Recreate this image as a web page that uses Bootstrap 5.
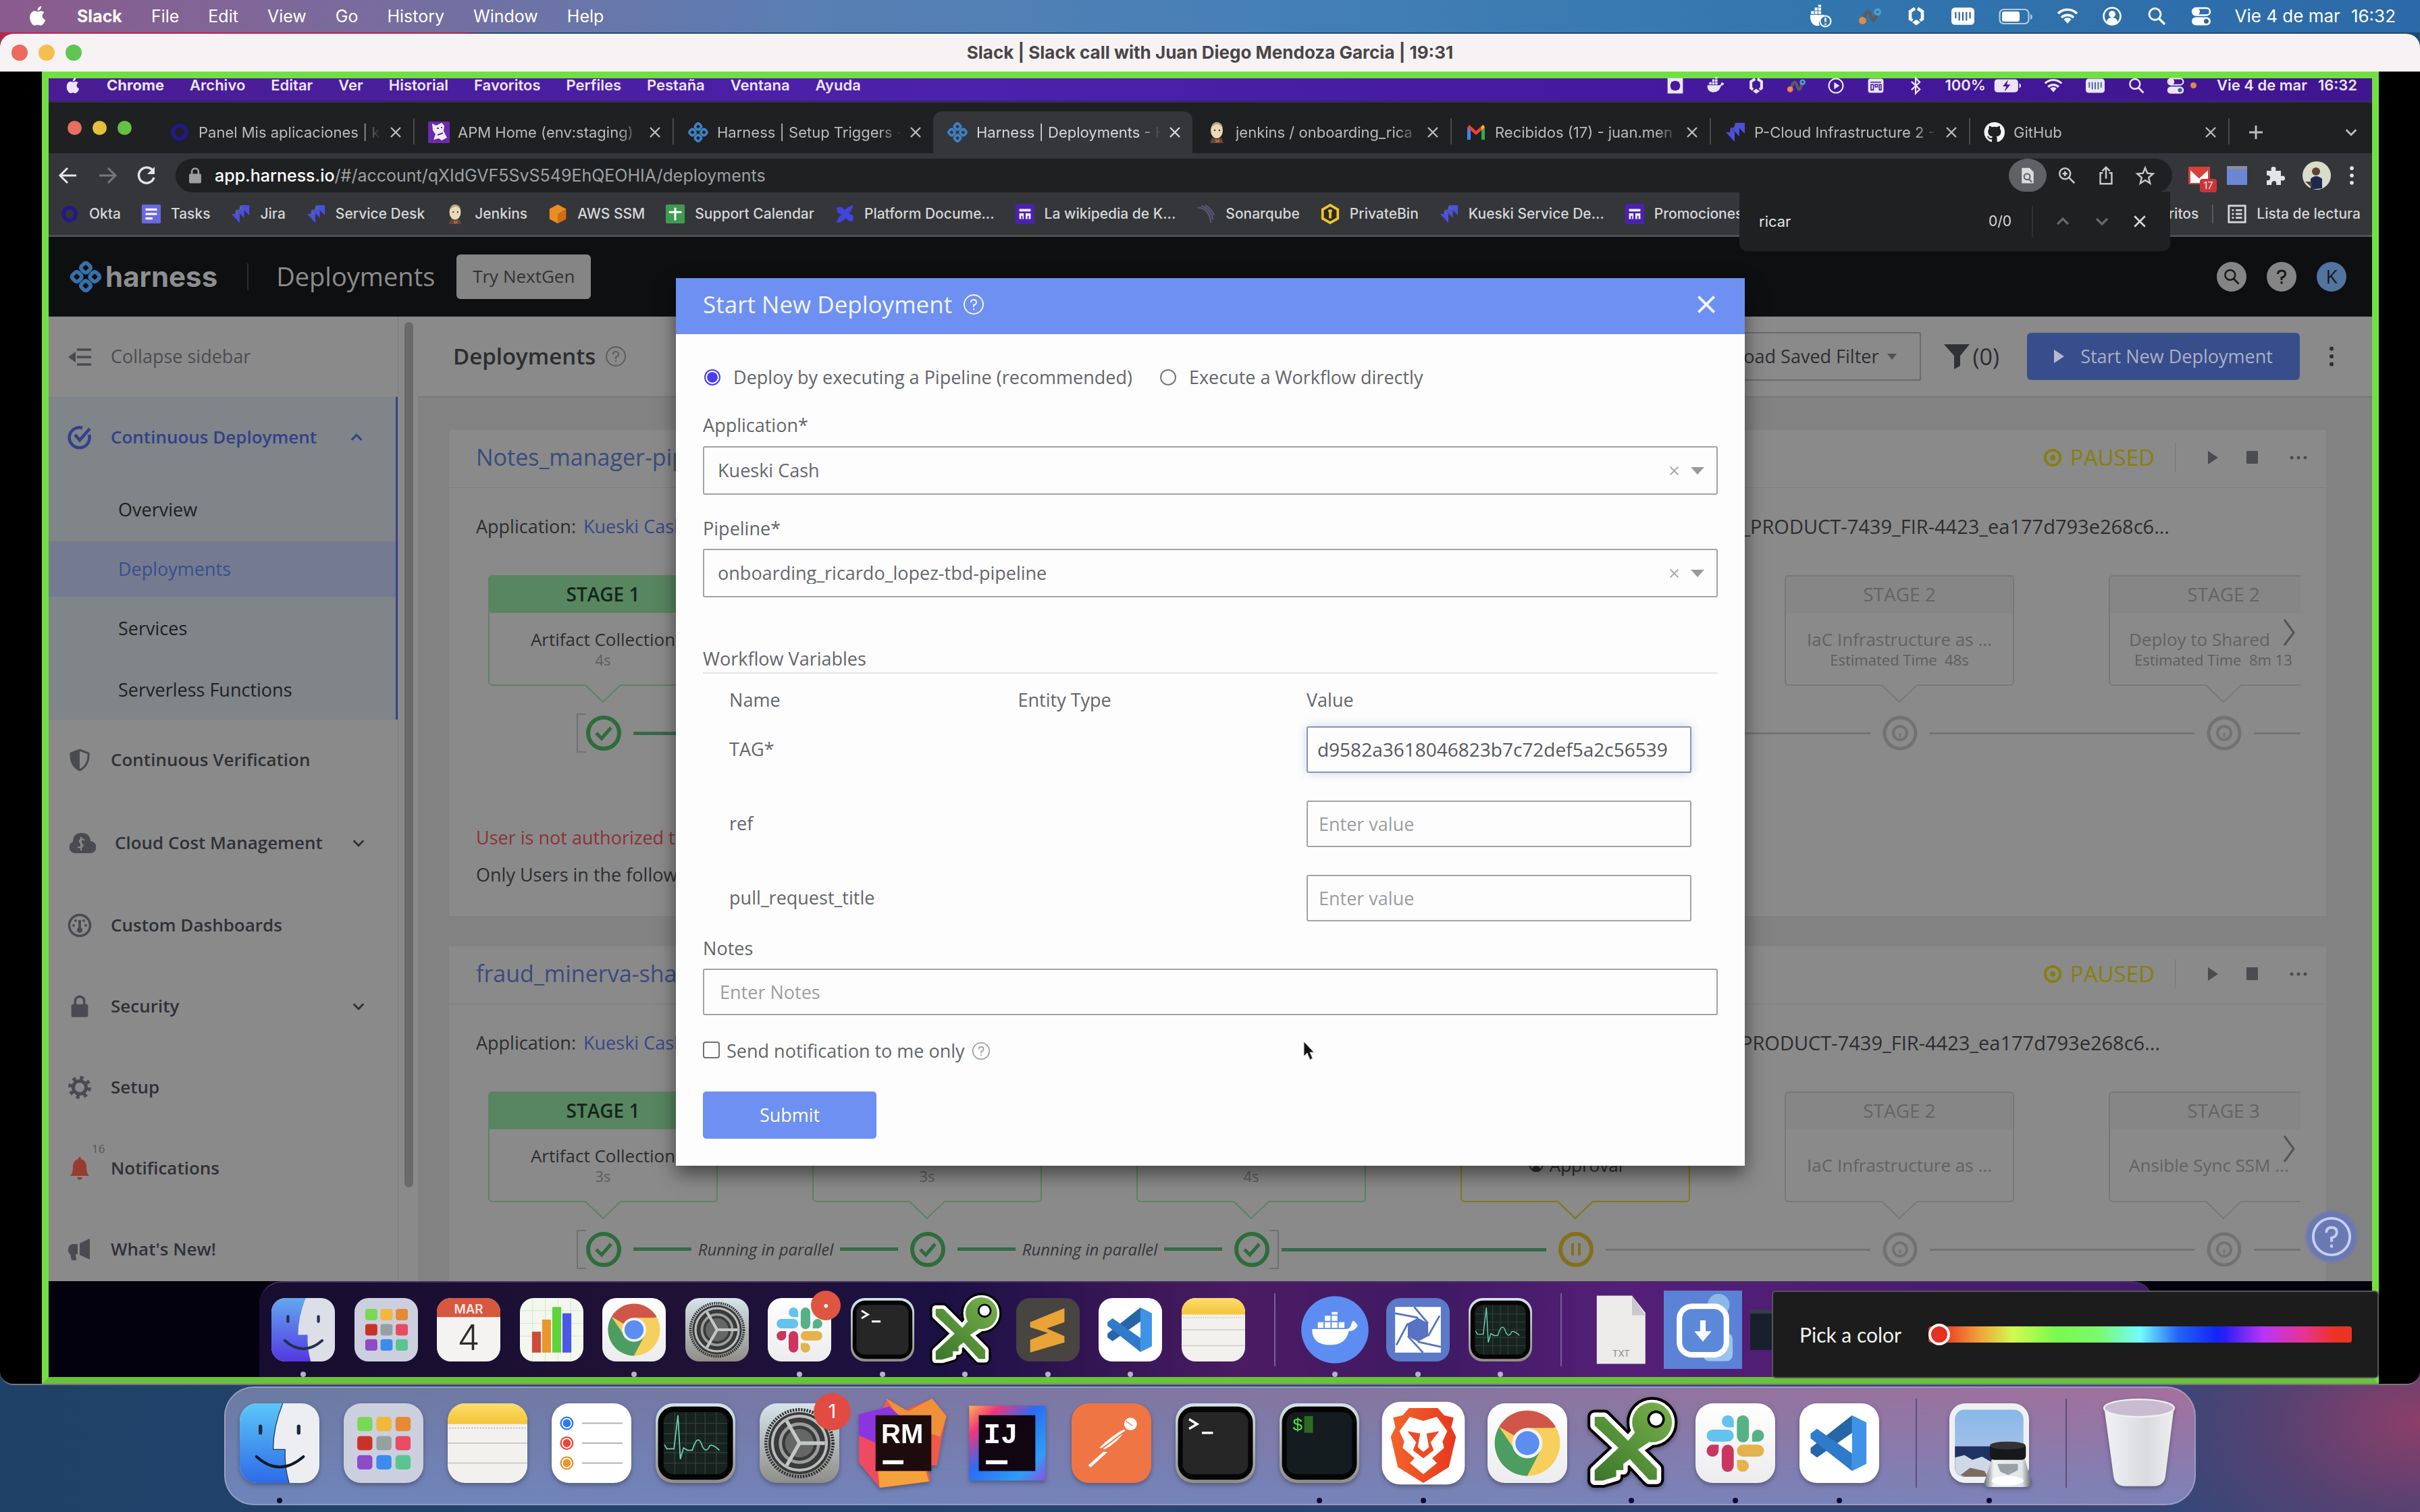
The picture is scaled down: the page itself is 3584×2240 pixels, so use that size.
<!DOCTYPE html>
<html lang="es">
<head>
<meta charset="utf-8">
<meta name="viewport" content="width=device-width, initial-scale=1">
<title>Slack | Slack call with Juan Diego Mendoza Garcia</title>
<link href="https://cdn.jsdelivr.net/npm/bootstrap@5.3.0/dist/css/bootstrap.min.css" rel="stylesheet">
<style>
:root{--ui:Inter,"Liberation Sans",sans-serif;--web:"Open Sans","Noto Sans",sans-serif}
html,body{height:100%}
body{margin:0;overflow:hidden;font-family:var(--ui);font-size:25px;line-height:1.2;color:#fff;
 background:linear-gradient(90deg,#b22b4d 0,#a8284a 19%,#1f4a70 20%,#1f4a70 100%) 0 0/100% 900px no-repeat,
 radial-gradient(420px 260px at 100% 94%,#8d3e69 0,rgba(120,60,105,.5) 50%,transparent 100%),linear-gradient(90deg,#1f4168 0,#254471 50%,#37487a 100%)}
svg{display:block;flex:none}
symbol{overflow:visible}
a{color:inherit;text-decoration:none}
button{font-family:inherit}
.plain{background:none;border:0;padding:0;color:inherit;line-height:1}
.ic{width:32px;height:32px}
.osbar{height:48px;padding:0 36px 0 43px;background:linear-gradient(90deg,#8a5b8c 0,#7b6a9c 14%,#5a7fb4 33%,#4580b6 52%,#3276ae 75%,#2c69a8 100%);font-size:25px}
.osbar nav,.vidbar nav{white-space:nowrap}
.osbar nav{gap:43px}
.osbar time{font-size:26px}
.callwin{border-radius:20px 20px 20px 20px;background:#000;min-height:0;margin-top:2px;overflow:hidden;border-bottom:2px solid #777}
.titlebar{height:56px;background:#f7f3f4;color:#4a4647;font-weight:700;font-size:26px}
.lights{left:17px;top:0;bottom:0;gap:16px}
.dotc{width:24px;height:24px;border-radius:50%}
.stagebox{margin:0 61px 0 62px;border:10px solid #73de43;border-bottom-color:#68c23a;min-height:0}
.vidbar{height:36px;background:linear-gradient(90deg,#4a1c93 0,#4c21ad 40%,#451aa0 65%,#3f1590 100%);font-size:22px;font-weight:600;padding:0 22px 12px 26px;color:#ece4fa;border-bottom:3px solid #3b2763}
.vidbar nav{gap:38px}
.tabstrip{height:75px;background:#1f2021;padding:13px 0 0 28px;font-size:22px;color:#b9bbbe}
.tabstrip .lts{gap:16px;width:130px;padding-bottom:14px}
.tabstrip .lts .dotc{width:21px;height:21px}
.tabx{flex:0 1 384px;min-width:0;gap:12px;padding:0 17px 0 20px;position:relative}
.tabx .ic{width:32px;height:32px}
.tabx .tt{flex:1;overflow:hidden;white-space:nowrap;-webkit-mask:linear-gradient(90deg,#000 88%,transparent)}
.tabx.sep{border-right:2px solid #4a4b4d;border-image:linear-gradient(transparent 18%,#4a4b4d 18%,#4a4b4d 78%,transparent 78%) 1}
.tabx.on{background:#35363a;border-radius:14px 14px 0 0;color:#d4d6d9}
.xs{width:18px;height:18px}
.toolrow{height:58px;background:#35363a;padding:8px 24px 0 11px;color:#e3e4e6}
.navs{gap:26px;width:177px;padding-left:2px}
.urlbar{height:50px;border-radius:25px;background:#1f2022;color:#9da0a3;padding:0 12px 0 16px;font-size:25px}
.urlbar b{color:#fff;font-weight:500}
.urlbar .right{gap:2px}
.urlbar .cell{width:56px;height:50px;border-radius:50%}
.ext{gap:25px;padding-left:24px}
.marks{height:66px;background:#35363a;border-bottom:3px solid #505154;padding:0 17px 0 16px;font-size:21px;font-weight:500;color:#d6d7d9;gap:30px;white-space:nowrap}
.marks a{gap:14px}
.marks .ic{width:30px;height:32px}
.marks .fin{gap:20px}
.findbox{right:299px;top:168px;width:638px;height:88px;background:#1f2022;border-radius:0 0 10px 10px;padding:0 35px 0 29px;font-size:23px;color:#d7d8da;z-index:5}
.findbox input{background:none;border:0;color:#e2e3e4;font-size:22px;width:300px;outline:0;padding:0}
.app{font-family:var(--web);position:relative;overflow:hidden;min-height:0;color:#2d2d30;font-size:25px;background:#838383}
.apphead{height:118px;background:#0e0f11;color:#8b8b8b;padding:0 38px 0 30px;flex:none}
.brandtx{font-size:42px;font-weight:700;line-height:1;color:#8e8e90;font-family:var(--ui);margin-left:4px}
.apphead .big{font-size:38px}
.nextgen{width:199px;height:66px;background:#858585;border-radius:6px;color:#333;font-size:26px;border:0}
.rnd{width:44px;height:44px;border-radius:50%;background:#858585;color:#17181a;font-size:28px}
.side{width:518px;background:#8a8a8b;border-right:1px solid #7c7c7c;font-size:26px;font-weight:600;color:#303135;flex:none}
.side a{display:flex;align-items:center;height:120px;padding-left:28px;gap:28px;flex:none}
.side .ic{width:36px;height:38px;color:#4a4b50}
.side .line{height:1px;background:#747474;margin:0 0 0 28px}
.side .sub{height:94px;padding-left:103px;font-weight:500;font-size:27px;color:#1e2024}
.cdblock{background:#7f8588;border-right:3px solid #39438f}
.track{width:29px;padding:8px 7px 0 9px;background:#8a8a8a;flex:none}
.track div{height:1282px;border-radius:8px;background:#6a6a6a}
.main{background:#828283;min-width:0}
.mainhead{height:120px;background:#8a8a8a;border-bottom:2px solid #797979;padding:0 54px 0 52px;flex:none}
.filter{height:72px;border:2px solid #696969;width:420px;padding-right:34px;background:none;border-radius:3px;color:#2e2e31;font-size:27px;gap:12px}
.startbtn{width:404px;height:70px;background:#384e8c;color:#a9b0c4;border:0;border-radius:6px;font-size:27px;gap:24px}
.cards{padding:48px 68px 0 46px;gap:45px}
.dep{background:#8a8a8a;flex:none;height:720px;font-size:27px;position:relative}
.dephead{height:86px;border-bottom:1px solid #7e7e7e;padding:0 27px 4px 40px}
.dephead h2{font-size:34px;margin:0;color:#3c4a7c;font-weight:400}
.paused{color:#85800c;font-size:33px;gap:11px}
.apprw{height:114px;padding:0 232px 0 40px;white-space:nowrap}
.apprw.b{padding-right:246px}
.apprw a{color:#3a4786}
.apprw .art{font-size:29px}
.rail{margin:15px 38px 0 58px;overflow:hidden}
.stages{gap:140px}
.stg{width:340px;height:164px;border:2px solid #5f8168;border-radius:6px;flex:none;position:relative}
.stg.off{border-color:#787878;color:#626263}
.stg.off .sh{background:#868686;color:#646465}
.stg.wait{border-color:#7c7a1a}
.stg .sh{height:54px;background:#578660;color:#15251a;border-radius:4px 4px 0 0;font-size:28px}
.stg .sb{height:106px;line-height:1.25;font-size:26px}
.stg small{font-size:22px;color:#5d5d5f}
.tip{width:54px;height:28px;margin:-2px 0 0 143px;position:relative;display:block;flex:none}
.tips{gap:426px}
.tips .tip{margin:0}
.tips{margin:-2px 0 0 143px}
.nodes{margin-top:15px;padding-left:131px;height:58px;color:#35373a}
.brk{width:14px;height:58px;border:2px solid #6d7074;flex:none}
.brk.l{border-right:0}.brk.r{border-left:0}
.cn{width:52px;height:52px;flex:none}
.con{width:428px;flex:none;padding:0 18px;gap:10px;font-style:italic;font-size:24px}
.con.after{width:414px;padding-left:4px}
.con i{height:5px;background:#36694a;flex:1}
.con.gy i{background:#737373;height:3px}
.errs{padding:110px 40px 0;white-space:nowrap}
.nextchev{right:44px;top:278px;width:22px;height:44px}
.helpfab{right:20px;bottom:26px;width:80px;height:80px;border-radius:50%;background:radial-gradient(#6a79b4 0,#6a79b4 62%,rgba(110,125,185,0) 72%)}
.helpfab svg{width:62px;height:62px}
.dlgwrap{inset:61px 0 auto 0;z-index:4}
.dlg{width:46%;background:#fdfdfd;box-shadow:0 12px 26px rgba(0,0,0,.5);color:#64656b;font-size:27px}
.dlghead{height:83px;background:#6e90f2;color:#f2f5ff;padding:0 42px 6px 40px;font-size:35px}
.dlgbody{padding:44px 40px 40px}
.dlg label,.dlg .lb{line-height:36px;height:36px}
.dlg .lb{display:block}
.rad{height:40px;gap:19px;margin-bottom:33px}
.rad label{line-height:40px;height:40px}
.rad input{appearance:none;width:24px;height:24px;border:2px solid #77777c;border-radius:50%;margin:0}
.rad input:checked{border-color:#4a3cf0;background:radial-gradient(#4a3cf0 0,#4a3cf0 52%,#fff 58%)}
.dlg select,.dlg .tx{width:100%;appearance:none;background:#fdfdfd;border:2px solid #a3a3a6;border-radius:3px;color:#66676d;padding:0 20px;font-size:27px;outline:0}
.dlg select{height:72px}
.dlg .tx{height:69px;padding:0 16px}
.dlg .nt{padding:0 23px}
.dlg .tx::placeholder{color:#9c9da2;opacity:1}
.dlg .tag{border-color:#8d93ae;box-shadow:0 0 14px rgba(90,110,190,.3);color:#56575d;font-size:28px;padding:0 14px}
.selx{right:20px;top:0;height:72px;gap:17px;color:#a4a4a6}
.wv{margin:73px 0 0;line-height:36px;padding-bottom:2px;border-bottom:2px solid #e4e4e6}
.vars{width:100%;table-layout:fixed}
.vars th{font-weight:400;height:57px;padding:20px 0 0;line-height:36px;width:30%}
.vars th:last-child{width:40%}
.vars td{height:110px;padding:0;vertical-align:middle}
.chk input{appearance:none;width:25px;height:25px;border:2px solid #707075;border-radius:4px;margin:0 10px 4px 0}
.submit{width:257px;height:70px;background:#6e90f2;border:0;border-radius:5px;color:#fff;font-size:27px;margin-top:42px}
.cursor{left:59%;top:0;width:20px;height:34px}
.vdock{height:142px;background:#04010f;padding:0 0 0 312px;flex:none;position:relative;overflow:hidden}
.vshelf{width:2807px;border-radius:34px 34px 0 0;background:linear-gradient(90deg,#160d31 0,#1f1135 22%,#1b1043 36%,#4b1b63 52%,#3f1a64 62%,#551f78 72%,#421968 100%);padding:0 18px;position:relative;flex:none;border-top:2px solid #45305e}
.vgrp .it{width:94px;flex:none}
.vgrp .it>svg{width:94px;height:94px;overflow:visible}
.it{position:relative}
.it .run{left:50%;margin-left:-4px;border-radius:50%;width:8px;height:8px;background:#b9aed0;bottom:-23px}
.vsep{width:2px;height:108px;background:#7a5d92;flex:none}
.picker{right:-10px;bottom:-2px;width:899px;height:130px;background:#1c1c1c;border:2px solid #565656;border-radius:6px;padding:0 38px 0 39px;gap:40px;font:30px Lato,sans-serif;color:#f1f1f1;z-index:8}
.picker input{appearance:none;flex:1;height:24px;border-radius:4px;margin:0;background:linear-gradient(90deg,#e93323 3%,#f0a23b 12%,#d2fa50 20%,#7bf94c 30%,#7bf96b 40%,#72fbfd 50%,#2463f5 59%,#1226f5 68%,#2a1ff5 70%,#b934f7 79%,#e7338f 89%,#eb3323 96%)}
.picker input::-webkit-slider-thumb{appearance:none;width:32px;height:32px;border-radius:50%;background:#e53022;border:4px solid #fff}
.dockzone{height:188px;flex:none}
.dockbar{height:176px;margin-top:2px;border-radius:44px;border:2px solid rgba(190,190,220,.45);padding:0 23px 9px 21px;gap:36px;background:linear-gradient(0deg,rgba(112,136,194,.75) 0,rgba(112,136,194,0) 95%),linear-gradient(90deg,#6a7ba3 0,#7877a5 30%,#86769f 60%,#a3709d 100%)}
.dockbar .it{width:118px;flex:none}
.dockbar .it>svg{width:118px;height:118px;overflow:visible;filter:drop-shadow(0 3px 3px rgba(0,0,0,.3))}
.dockbar .run{background:#0f0a35;bottom:-30px}
.dsep{width:2px;height:132px;background:#5b4e7c;margin:0 12px 0 18px}
.bdg{width:55px;height:55px;border-radius:50%;background:#e24b41;font-size:29px;right:-17px;top:-15px}
.bdg.sm{width:44px;height:44px;font-size:18px;right:-14px;top:-11px;background:#df5540}
</style>
</head>
<body class="d-flex flex-column">
<svg width="0" height="0" style="position:absolute" aria-hidden="true"><defs>
<linearGradient id="gBlue" x1="0" y1="0" x2="0" y2="1"><stop offset="0" stop-color="#5cc6f8"/><stop offset="1" stop-color="#2d6be8"/></linearGradient>
<linearGradient id="gViol" x1="0" y1="0" x2="0" y2="1"><stop offset="0" stop-color="#62a8f0"/><stop offset="1" stop-color="#5338e0"/></linearGradient>
<linearGradient id="gGrey" x1="0" y1="0" x2="0" y2="1"><stop offset="0" stop-color="#d6e4ea"/><stop offset="1" stop-color="#8f8d88"/></linearGradient>
<linearGradient id="gWhite" x1="0" y1="0" x2="0" y2="1"><stop offset="0" stop-color="#fff"/><stop offset="1" stop-color="#ececee"/></linearGradient>
<linearGradient id="gYel" x1="0" y1="0" x2="0" y2="1"><stop offset="0" stop-color="#fbdd6e"/><stop offset="1" stop-color="#f5c537"/></linearGradient>
<linearGradient id="gIJ" x1="0" y1="0" x2="1" y2="1"><stop offset="0" stop-color="#fdb34a"/><stop offset=".2" stop-color="#f0357e"/><stop offset=".45" stop-color="#2a6df4"/><stop offset=".8" stop-color="#2f9df6"/><stop offset="1" stop-color="#8e4ee0"/></linearGradient>
<linearGradient id="gKey" gradientUnits="userSpaceOnUse" x1="95" y1="0" x2="5" y2="100"><stop offset="0" stop-color="#77b04a"/><stop offset="1" stop-color="#3a752b"/></linearGradient>
<linearGradient id="gBrave" x1="0" y1="0" x2="1" y2="0"><stop offset="0" stop-color="#f2652a"/><stop offset="1" stop-color="#e8371f"/></linearGradient>
<linearGradient id="gTrash" x1="0" y1="0" x2="1" y2="0"><stop offset="0" stop-color="#f1f2f4"/><stop offset=".6" stop-color="#d8dade"/><stop offset="1" stop-color="#eceef0"/></linearGradient>
<linearGradient id="gSky" x1="0" y1="0" x2="0" y2="1"><stop offset="0" stop-color="#8ab7ea"/><stop offset="1" stop-color="#b3c7e6"/></linearGradient>
<linearGradient id="gGlass" x1="0" y1="0" x2="1" y2="0"><stop offset="0" stop-color="#6d7276"/><stop offset=".2" stop-color="#eef0f2"/><stop offset=".8" stop-color="#e2e5e8"/><stop offset="1" stop-color="#5e6266"/></linearGradient>

<symbol id="apple" viewBox="0 0 24 28"><path fill="currentColor" d="M16.5 1c.2 1.900-.6 3.400-1.600 4.500-1 1.100-2.400 1.800-3.700 1.700-.2-1.700.6-3.300 1.500-4.300C13.700 1.800 15.300 1.100 16.500 1zM22 20.400c-.7 1.600-1 2.300-1.900 3.600-1.200 1.800-2.700 3.500-4.500 3.500-1.500 0-2-1-4.100-1s-2.600 1-4.100 1c-1.800 0-3.200-1.700-4.400-3.500C-.2 19.300.3 12.200 3.600 9.300 4.800 8.200 6.300 7.600 7.700 7.600c1.700 0 2.800 1 4.200 1s2.200-1 4.200-1c1.500 0 3.200.8 4.300 2.200-3.800 2.100-3.200 7.500.6 9.200z" transform="scale(.95)"/></symbol>
<symbol id="whale" viewBox="0 0 32 32"><path fill="currentColor" d="M2 15h20c2 0 3-1 3-3 1-2 2-2 3-1l2 1c-1 3-3 4-5 4-2 7-6 11-13 11C5 27 1 22 2 15zM5 10h4v4H5zM10 10h4v4h-4zM15 10h4v4h-4zM10 5h4v4h-4zM15 5h4v4h-4zM15 1h4v3h-4z"/></symbol>
<symbol id="whalew" viewBox="0 0 32 32"><path fill="currentColor" d="M2 14h19v3a8 8 0 0 0-6 12C6 31 1 24 2 14zM3 9h4v4H3zM8 9h4v4H8zM13 9h4v4h-4zM8 4h4v4H8zM13 4h4v4h-4zM13 0h4v3h-4z"/><circle cx="23" cy="23" r="7.500" fill="none" stroke="currentColor" stroke-width="2"/><path d="M23 18v6M23 26v2" stroke="currentColor" stroke-width="2.400"/></symbol>
<symbol id="nodes" viewBox="0 0 32 32"><path d="M7 23C9 14 11 10 14 10s4 12 7 12 4-7 5-12" fill="none" stroke="#595c63" stroke-width="5"/><circle cx="6" cy="22" r="5" fill="#e68a45"/><circle cx="27" cy="10" r="3.500" fill="none" stroke="#4aa3cf" stroke-width="3"/></symbol>
<symbol id="hexa" viewBox="0 0 32 32"><path d="M14 4.500L7 9v11l3.500 2.500M18 4.500L25 9v11l-3.500 2.500" fill="none" stroke="currentColor" stroke-width="4.600"/><path d="M16 21l6 4-6 4.500-6-4.500z" fill="currentColor"/></symbol>
<symbol id="kbd" viewBox="0 0 32 32"><rect x="0" y="4" width="32" height="24" rx="5" fill="currentColor"/><path d="M6 10v9M11 10v12M16 10v12M21 10v12M26 10v9" stroke="#34628f" stroke-width="2"/></symbol>
<symbol id="batt" viewBox="0 0 52 32"><rect x="1.500" y="6" width="43" height="21" rx="6" fill="none" stroke="currentColor" stroke-opacity=".65" stroke-width="2.200"/><rect x="5" y="9" width="26" height="15" rx="3" fill="currentColor"/><path d="M47 13v8q3-1 3-4t-3-4z" fill="currentColor" opacity=".6"/></symbol>
<symbol id="wifi" viewBox="0 0 32 32"><g fill="none" stroke="currentColor" stroke-width="3.600"><path d="M2 12a20 20 0 0 1 28 0M7 18a13 13 0 0 1 18 0"/></g><path d="M16 27l-5.500-6.500a8 8 0 0 1 11 0z" fill="currentColor"/></symbol>
<symbol id="user" viewBox="0 0 32 32"><circle cx="16" cy="16" r="12.500" fill="none" stroke="currentColor" stroke-width="2.600"/><circle cx="16" cy="13" r="5" fill="currentColor"/><path d="M8 24q1-6 8-6t8 6-8 4-8-4z" fill="currentColor"/></symbol>
<symbol id="mag" viewBox="0 0 32 32"><circle cx="13.500" cy="13" r="8.500" fill="none" stroke="currentColor" stroke-width="2.800"/><path d="M19.500 19.500L28 28" stroke="currentColor" stroke-width="3.200"/></symbol>
<symbol id="cc" viewBox="0 0 32 32"><rect x="3" y="4" width="26" height="10.500" rx="5.200" fill="none" stroke="currentColor" stroke-width="2.400"/><circle cx="9" cy="9.200" r="5" fill="currentColor"/><rect x="2" y="17.500" width="28" height="12" rx="6" fill="currentColor"/><circle cx="23.500" cy="23.500" r="3.500" fill="#34628f"/></symbol>
<symbol id="frame" viewBox="0 0 32 32"><path d="M2 2h28v28H2zM9 9h14v14H9z" fill="currentColor" fill-rule="evenodd"/><circle cx="16" cy="16" r="9" fill="#46199b"/></symbol>
<symbol id="playc" viewBox="0 0 32 32"><circle cx="16" cy="16" r="12" fill="none" stroke="currentColor" stroke-width="2.400"/><path d="M13 10l9 6-9 6z" fill="currentColor"/></symbol>
<symbol id="panel" viewBox="0 0 32 32"><rect x="3" y="4" width="26" height="24" rx="4" fill="currentColor"/><path d="M7 10h18M8 14h4v9H8zM15 14h4v4h-4zM22 14h3v9h-3z" stroke="#46199b" stroke-width="1.800" fill="none"/></symbol>
<symbol id="blue" viewBox="0 0 32 32"><path d="M9 9l14 13-7 7V3l7 7L9 23" fill="none" stroke="currentColor" stroke-width="2.600"/></symbol>
<symbol id="battc" viewBox="0 0 46 32"><rect x="1" y="5" width="40" height="22" rx="5" fill="currentColor"/><path d="M24 6l-9 11h6l-3 9 10-12h-6z" fill="#46199b"/><path d="M43 12v8q3-1 3-4t-3-4z" fill="currentColor"/></symbol>

<symbol id="x" viewBox="0 0 18 18"><path d="M2 2l14 14M16 2L2 16" stroke="currentColor" stroke-width="2.400" fill="none"/></symbol>
<symbol id="okta" viewBox="0 0 32 32"><circle cx="16" cy="16" r="10" fill="none" stroke="#221a86" stroke-width="6"/></symbol>
<symbol id="dog" viewBox="0 0 32 32"><rect width="32" height="32" rx="2" fill="#6b2ab0"/><path d="M6 3l6 3 8-4 4 4-1 8 5 10-8 4-4-3-8 2 3-8-4-6z" fill="#f4eefb"/><path d="M13 10h3M19 9h2M14 20l8-3" stroke="#6b2ab0" stroke-width="2"/></symbol>
<symbol id="harn" viewBox="0 0 32 32"><g fill="none" stroke="#3f82c4" stroke-width="3.600"><rect x="12" y="3.500" width="8" height="8" rx="2.500" transform="rotate(45 16 7.500)"/><rect x="12" y="20.500" width="8" height="8" rx="2.500" transform="rotate(45 16 24.500)"/><rect x="3.500" y="12" width="8" height="8" rx="2.500" transform="rotate(45 7.500 16)"/><rect x="20.500" y="12" width="8" height="8" rx="2.500" transform="rotate(45 24.500 16)"/></g></symbol>
<symbol id="butler" viewBox="0 0 32 32"><ellipse cx="16" cy="13" rx="9" ry="12" fill="#ead9b5"/><path d="M8 10Q9 1 17 1q7 1 8 9-4-6-9-6-5 1-8 6z" fill="#b0a58a"/><path d="M9 24q8 4 14 0l3 8H6z" fill="#5c4a40"/><path d="M14 25l3 3 3-3v6h-6z" fill="#c55a42"/><circle cx="13" cy="13" r="1.200" fill="#333"/><circle cx="20" cy="13" r="1.200" fill="#333"/></symbol>
<symbol id="gmail" viewBox="0 0 32 32"><path d="M3 27V9l5 4v14z" fill="#4285f4"/><path d="M29 27V9l-5 4v14z" fill="#34a853"/><path d="M3 9l3-4 10 9 10-9 3 4-13 11z" fill="#ea4335"/><path d="M24 13l5-4-2-4-3 2z" fill="#fbbc04"/></symbol>
<symbol id="jira" viewBox="0 0 32 32"><path d="M16 2h14v16l-6-6zM9 9h13v13l-5-5zM2 16h13v14z" fill="#4a50e0"/><path d="M16 2l6 7h-8zM9 9l6 7H8z" fill="#7a80f2" opacity=".6"/></symbol>
<symbol id="cat" viewBox="0 0 32 32"><path fill="#f4f4f5" d="M16 1a15 15 0 0 0-5 29.300c.8.1 1-.4 1-.8v-3c-4 .9-5-1.900-5-1.900-.8-1.700-1.700-2.200-1.700-2.200-1.300-.9.200-.9.200-.9 1.500.1 2.300 1.500 2.300 1.500 1.300 2.300 3.500 1.600 4.400 1.200.1-1 .5-1.600.9-2-3.300-.4-6.800-1.700-6.800-7.400 0-1.600.6-3 1.500-4-.1-.4-.7-1.900.2-4 0 0 1.200-.4 4.100 1.500a14 14 0 0 1 7.500 0c2.900-1.900 4.100-1.500 4.100-1.500.8 2.100.3 3.600.1 4a6 6 0 0 1 1.600 4c0 5.800-3.500 7-6.800 7.400.5.500 1 1.400 1 2.800v4.500c0 .4.300.9 1 .8A15 15 0 0 0 16 1z"/></symbol>
<symbol id="lst" viewBox="0 0 32 32"><rect x="1" y="1" width="30" height="30" rx="2" fill="#6a68e0"/><path d="M7 9h18M7 16h18M7 23h11" stroke="#fff" stroke-width="3.400"/></symbol>
<symbol id="cube" viewBox="0 0 32 32"><path d="M16 1l13 7v16l-13 7-13-7V8z" fill="#e98d25"/><path d="M16 16l13-8v16l-13 7z" fill="#cf6e16"/></symbol>
<symbol id="sheet" viewBox="0 0 32 32"><rect x="1" y="1" width="30" height="30" rx="2" fill="#3f9a52"/><path d="M16 6v20M6 13h20" stroke="#fff" stroke-width="3.200"/></symbol>
<symbol id="conf" viewBox="0 0 32 32"><path d="M30 2q-8 1-14 8Q10 2 3 6l2 8 6 3q-6 5-8 13 9-1 15-8 5 8 11 5l1-8-7-4q5-6 7-13z" fill="#4145dd"/></symbol>
<symbol id="wiki" viewBox="0 0 32 32"><rect x="1" y="0" width="30" height="32" rx="2" fill="#4a22ae"/><path d="M7 8h18v4H7zM7 15h7v9H7zM17 15h8v9h-8z" fill="#f2edff"/><path d="M11 19v5M21 19v5" stroke="#4a22ae" stroke-width="2"/></symbol>
<symbol id="sonar" viewBox="0 0 32 32"><path d="M3 6q18 0 21 24M9 3q15 5 18 22M15 2q10 6 14 16" fill="none" stroke="#5a5673" stroke-width="2.400"/></symbol>
<symbol id="pbin" viewBox="0 0 32 32"><path d="M16 2l12 7v14l-12 7-12-7V9z" fill="#2b2b1c" stroke="#eec52b" stroke-width="4"/><path d="M16 9v14M13 11h6" stroke="#eec52b" stroke-width="4"/></symbol>
<symbol id="rlist" viewBox="0 0 32 32"><rect x="3" y="3" width="26" height="26" fill="none" stroke="currentColor" stroke-width="3"/><path d="M8 10h3M8 16h3M8 22h3M14 10h10M14 16h10M14 22h10" stroke="currentColor" stroke-width="3"/></symbol>
<symbol id="back" viewBox="0 0 32 32"><path d="M28 16H5M15 5L4 16l11 11" fill="none" stroke="currentColor" stroke-width="3"/></symbol>
<symbol id="fwd" viewBox="0 0 32 32"><path d="M4 16h23M17 5l11 11-11 11" fill="none" stroke="currentColor" stroke-width="3"/></symbol>
<symbol id="reload" viewBox="0 0 32 32"><path d="M26 10a11.500 11.500 0 1 0 1 9" fill="none" stroke="currentColor" stroke-width="3.400"/><path d="M28 3v11H17z" fill="currentColor"/></symbol>
<symbol id="lock" viewBox="0 0 32 32"><path d="M10 14V9a6 6 0 0 1 12 0v5" fill="none" stroke="currentColor" stroke-width="3.200"/><rect x="5" y="13" width="22" height="17" rx="2" fill="currentColor"/></symbol>
<symbol id="fdoc" viewBox="0 0 32 32"><path d="M6 3h13l7 7v19H6z" fill="#dcdcdc"/><circle cx="15" cy="18" r="5" fill="none" stroke="#66686b" stroke-width="2.600"/><path d="M18 22l5 5" stroke="#66686b" stroke-width="2.600"/></symbol>
<symbol id="zoomp" viewBox="0 0 32 32"><circle cx="13" cy="13" r="8.500" fill="none" stroke="currentColor" stroke-width="2.600"/><path d="M19 19l9 9M9 13h8M13 9v8" stroke="currentColor" stroke-width="2.800"/></symbol>
<symbol id="share" viewBox="0 0 32 32"><path d="M11 12H7v17h18V12h-4M16 21V4M10 9l6-6 6 6" fill="none" stroke="currentColor" stroke-width="2.600"/></symbol>
<symbol id="star" viewBox="0 0 32 32"><path d="M16 4l3.500 8.500 9 .8-7 6 2.200 9L16 23.500 8.300 28.300l2.200-9-7-6 9-.8z" fill="none" stroke="currentColor" stroke-width="2.600"/></symbol>
<symbol id="puz" viewBox="0 0 32 32"><path d="M4 9h7q-2-6 3-6t3 6h8v8q6-2 6 3t-6 3v7h-7q1-6-3-6t-4 6H4v-7q5 1 5-3.500T4 16z" fill="currentColor"/></symbol>
<symbol id="vdots" viewBox="0 0 12 36"><g fill="currentColor"><circle cx="6" cy="5" r="3.400"/><circle cx="6" cy="18" r="3.400"/><circle cx="6" cy="31" r="3.400"/></g></symbol>
<symbol id="chev" viewBox="0 0 24 24"><path d="M4 8l8 8 8-8" fill="none" stroke="currentColor" stroke-width="3.200"/></symbol>
<symbol id="chevu" viewBox="0 0 24 24"><path d="M4 16l8-8 8 8" fill="none" stroke="currentColor" stroke-width="3.200"/></symbol>
<symbol id="q" viewBox="0 0 32 32"><circle cx="16" cy="16" r="14" fill="none" stroke="currentColor" stroke-width="2"/><path d="M12 13q0-4 4-4t4 3.500-4 4.500v3M16 22v2.400" fill="none" stroke="currentColor" stroke-width="2"/></symbol>
<symbol id="qm" viewBox="0 0 32 32"><path d="M10.500 12q0-5 5.500-5t5.500 4.500-5.500 6V21M16 23v3.500" fill="none" stroke="currentColor" stroke-width="3"/></symbol>
<symbol id="cbar" viewBox="0 0 36 36"><path d="M14 7h21M14 18h21M14 29h21" stroke="currentColor" stroke-width="3.600"/><path d="M12 10v16L1 18z" fill="currentColor"/></symbol>
<symbol id="cdi" viewBox="0 0 36 36"><path d="M32 14A15 15 0 1 1 22 4" fill="none" stroke="#343f8c" stroke-width="4.500"/><path d="M11 14l7 8L33 5" fill="none" stroke="#343f8c" stroke-width="4.500"/></symbol>
<symbol id="shield" viewBox="0 0 36 36"><path d="M18 3l13 5q1 18-13 25Q4 26 5 8z" fill="none" stroke="currentColor" stroke-width="3"/><path d="M18 3v30Q4 26 5 8z" fill="currentColor"/></symbol>
<symbol id="cloud" viewBox="0 0 42 36"><path d="M10 33a9 9 0 0 1-2-17Q8 3 21 3q12 0 13 12a9 9 0 0 1-1 18z" fill="currentColor"/><path d="M25 14q-3-3-6-1t1 5 2 5-7 1M20 9v20" stroke="#8a8a8a" stroke-width="2" fill="none"/></symbol>
<symbol id="gauge" viewBox="0 0 36 36"><circle cx="18" cy="18" r="15.500" fill="none" stroke="currentColor" stroke-width="3.600"/><path d="M18 10v16" stroke="currentColor" stroke-width="4"/><circle cx="18" cy="25" r="4" fill="currentColor"/><g fill="currentColor"><circle cx="9" cy="18" r="2"/><circle cx="27" cy="18" r="2"/><circle cx="12" cy="11" r="2"/><circle cx="24" cy="11" r="2"/></g></symbol>
<symbol id="gear" viewBox="0 0 36 36"><circle cx="18" cy="18" r="9.500" fill="none" stroke="currentColor" stroke-width="5"/><circle cx="18" cy="18" r="14" fill="none" stroke="currentColor" stroke-width="6" stroke-dasharray="5 6"/></symbol>
<symbol id="bell" viewBox="0 0 36 36"><path d="M18 1q2 0 2 3 8 2 8 12 0 9 4 13H4q4-4 4-13Q8 6 16 4q0-3 2-3zM14 31h8q-1 4-4 4t-4-4z" fill="#983c2f"/></symbol>
<symbol id="horn" viewBox="0 0 36 36"><path d="M33 2v31L18 26V9zM15 10v15h-3l1 9H6L4 25q-3-1-3-7t6-8z" fill="currentColor"/></symbol>
<symbol id="funnel" viewBox="0 0 40 40"><path d="M1 2h38L25 19v15l-9 5V19z" fill="currentColor"/></symbol>
<symbol id="pz" viewBox="0 0 32 36"><circle cx="16" cy="18" r="12" fill="none" stroke="currentColor" stroke-width="4"/><circle cx="16" cy="18" r="4.500" fill="currentColor"/></symbol>
<symbol id="ok" viewBox="0 0 52 52"><circle cx="26" cy="26" r="23" fill="none" stroke="#2f6c3b" stroke-width="6"/><path d="M15 26l8 8 14-16" fill="none" stroke="#2f6c3b" stroke-width="5"/></symbol>
<symbol id="offn" viewBox="0 0 52 52"><circle cx="26" cy="26" r="23" fill="none" stroke="#727272" stroke-width="5"/><circle cx="26" cy="26" r="10" fill="none" stroke="#727272" stroke-width="4"/><path d="M26 26v6" stroke="#727272" stroke-width="3"/></symbol>
<symbol id="hold" viewBox="0 0 52 52"><circle cx="26" cy="26" r="23" fill="none" stroke="#84701a" stroke-width="6"/><path d="M21 17v18M31 17v18" stroke="#84701a" stroke-width="4"/></symbol>
<symbol id="ptr" viewBox="0 0 54 28"><path d="M1 0h52L27 27z" fill="#8a8a8a"/><path d="M1 1l26 25L53 1" fill="none" stroke="currentColor" stroke-width="2"/></symbol>

<symbol id="finder" viewBox="0 0 100 100"><rect width="100" height="100" rx="22" fill="#eceef1"/><path d="M54 0Q42 30 42 58h15q-1 22 5 42H22A22 22 0 0 1 0 78V22A22 22 0 0 1 22 0z" fill="url(#gBlue)"/><path d="M54 0Q42 30 42 58h15q-1 22 5 42" fill="none" stroke="#17344f" stroke-width="1"/><path d="M26 29v8M74 29v8" stroke="#1b2a3a" stroke-width="4.500" stroke-linecap="round"/><path d="M21 67q29 26 59 0" fill="none" stroke="#111a24" stroke-width="3.500" stroke-linecap="round"/></symbol>
<symbol id="finder2" viewBox="0 0 100 100"><rect width="100" height="100" rx="22" fill="#dcdfe8"/><path d="M54 0Q42 30 42 58h15q-1 22 5 42H22A22 22 0 0 1 0 78V22A22 22 0 0 1 22 0z" fill="url(#gViol)"/><path d="M26 29v8M74 29v8" stroke="#23304a" stroke-width="4.500" stroke-linecap="round"/><path d="M21 67q29 26 59 0" fill="none" stroke="#23304a" stroke-width="4" stroke-linecap="round"/></symbol>
<symbol id="launch" viewBox="0 0 100 100"><rect width="100" height="100" rx="22" fill="#ccd0de"/><g><rect x="17" y="17" width="19" height="18" rx="4" fill="#79d855"/><rect x="41" y="17" width="19" height="18" rx="4" fill="#f3b73a"/><rect x="65" y="17" width="19" height="18" rx="4" fill="#e68a34"/><rect x="17" y="41" width="19" height="18" rx="4" fill="#c93327"/><rect x="41" y="41" width="19" height="18" rx="4" fill="#96a0a0"/><rect x="65" y="41" width="19" height="18" rx="4" fill="#e94b63"/><rect x="17" y="65" width="19" height="18" rx="4" fill="#8d4bc8"/><rect x="41" y="65" width="19" height="18" rx="4" fill="#3c8cf0"/><rect x="65" y="65" width="19" height="18" rx="4" fill="#5cc493"/></g></symbol>
<symbol id="notes" viewBox="0 0 100 100"><rect width="100" height="100" rx="22" fill="#f3f1ee"/><path d="M0 26v-4A22 22 0 0 1 22 0h56a22 22 0 0 1 22 22v4z" fill="url(#gYel)"/><path d="M2 31h96" stroke="#b8b5af" stroke-width="1.500" stroke-dasharray="1.500 2"/><path d="M0 50h100M0 75h100" stroke="#cfcdca" stroke-width="1.500"/></symbol>
<symbol id="remind" viewBox="0 0 100 100"><rect width="100" height="100" rx="22" fill="#fff"/><g stroke="#b4b4b6" stroke-width="1.800"><path d="M38 25h51M38 50h51M38 75h51"/></g><g fill="none" stroke-width="2"><circle cx="19" cy="25" r="7.500" stroke="#2b78f0"/><circle cx="19" cy="50" r="7.500" stroke="#e34a3c"/><circle cx="19" cy="75" r="7.500" stroke="#ea9430"/></g><circle cx="19" cy="25" r="5" fill="#2b78f0"/><circle cx="19" cy="50" r="5" fill="#e34a3c"/><circle cx="19" cy="75" r="5" fill="#ea9430"/></symbol>
<symbol id="activ" viewBox="0 0 100 100"><rect width="100" height="100" rx="22" fill="url(#gGrey)"/><rect x="3" y="4" width="94" height="92" rx="20" fill="#050505"/><rect x="10" y="11" width="80" height="78" rx="12" fill="#18221f"/><path d="M10 25h80M10 38h80M10 50h80M10 62h80M10 75h80M24 11v78M38 11v78M50 11v78M62 11v78M76 11v78" stroke="#30463f" stroke-width="1"/><path d="M11 52l3 5 9 0 5-42 3 55 4-14 5 3 6 0q7-24 13-4 5 8 9-2 4-2 12 6" fill="none" stroke="#6fcdb2" stroke-width="1.500"/></symbol>
<symbol id="sett" viewBox="0 0 100 100"><rect width="100" height="100" rx="22" fill="url(#gGrey)"/><circle cx="50" cy="50" r="42" fill="none" stroke="#2e2e2e" stroke-width="4" stroke-dasharray="2 1.500"/><circle cx="50" cy="50" r="39" fill="#3a3a3a"/><circle cx="50" cy="50" r="34" fill="none" stroke="#b9bcbc" stroke-width="3.500"/><circle cx="50" cy="50" r="24" fill="none" stroke="#9a9d9d" stroke-width="4"/><circle cx="50" cy="50" r="18" fill="#666"/><path d="M50 50h32M50 50L34 22M50 50L34 78" stroke="#c4c7c7" stroke-width="4.500"/></symbol>
<symbol id="rmine" viewBox="0 0 100 100"><path d="M12 30L30-6l22 14L86-6l18 22-6 28-6 34H80l4 20-62 8-28-32V14z" fill="#ee5a4a"/><path d="M28-6l28 16L86-6l18 22-8 26-46-16z" fill="#f0913a"/><path d="M-6 14L32 4 50 20 16 50-6 74z" fill="#8a35e0"/><path d="M-6 40l22 10 4 56-26-32z" fill="#ee4a62"/><path d="M18 84l58-6 6 20-62 8z" fill="#f6a23c"/><rect x="15" y="15" width="70" height="70" fill="#1e0c0c"/><text x="22" y="50" font-family="Liberation Sans" font-weight="700" font-size="34" fill="#fff">RM</text><path d="M24 74h26" stroke="#fff" stroke-width="5"/></symbol>
<symbol id="idea" viewBox="0 0 100 100"><rect x="2" y="3" width="96" height="94" fill="url(#gIJ)"/><rect x="14" y="15" width="71" height="70" fill="#120512"/><text x="20" y="50" font-family="Liberation Mono" font-weight="700" font-size="36" fill="#fff">IJ</text><path d="M23 74h27" stroke="#fff" stroke-width="5"/></symbol>
<symbol id="postm" viewBox="0 0 100 100"><rect width="100" height="100" rx="22" fill="#ef7545"/><circle cx="74" cy="26" r="8" fill="#fff"/><path d="M68 22l8 6M66 32q-16 8-32 24l8 2q16-8 26-24zM40 60L20 78l4 3 22-20z" fill="#fff" stroke="#ef7545" stroke-width="1"/><path d="M66 36L38 57" stroke="#ef7545" stroke-width="1.500"/></symbol>
<symbol id="term" viewBox="0 0 100 100"><rect width="100" height="100" rx="22" fill="url(#gGrey)"/><rect x="3" y="4" width="94" height="92" rx="20" fill="#050505"/><rect x="9" y="11" width="82" height="78" rx="12" fill="#262626"/><path d="M17 20l10 6-10 6M33 37h14" fill="none" stroke="#fff" stroke-width="3"/></symbol>
<symbol id="iterm" viewBox="0 0 100 100"><rect width="100" height="100" rx="22" fill="url(#gGrey)"/><rect x="3" y="4" width="94" height="92" rx="20" fill="#050505"/><rect x="9" y="11" width="82" height="78" rx="12" fill="#141c1f"/><text x="16" y="34" font-family="Liberation Mono" font-size="22" fill="#50e83c">$</text><rect x="31" y="16" width="11" height="21" fill="#2c6a22"/></symbol>
<symbol id="brave" viewBox="0 0 100 100"><rect x="-2" y="-2" width="104" height="104" rx="23" fill="#fff"/><path d="M32 6h36l8 9 12 3-3 12 6 12-9 38-32 20-32-20L9 42l6-12-3-12 12-3z" fill="url(#gBrave)"/><path d="M50 22l17-5 13 18-6 13 2 8-15 13 6 6-17 14-17-14 6-6-15-13 2-8-6-13 13-18z" fill="#fff"/><path d="M30 35l16 3-3 17 7 6 7-6-3-17 16-3-11 14 4 10-13 10-13-10 4-10z" fill="#ee4a25"/></symbol>
<symbol id="chrome" viewBox="0 0 100 100"><rect width="100" height="100" rx="22" fill="url(#gWhite)"/><circle cx="50" cy="50" r="41" fill="#f6cf5c"/><path d="M50 50L14.500 29.500A41 41 0 0 1 85.500 29.500z" fill="#d0564a"/><path d="M14.500 29.500A41 41 0 0 0 50 91L66 60 50 50 34 58z" fill="#4c9d62"/><path d="M50 31h35.500A41 41 0 0 1 50 91l17-31z" fill="#f6cf5c"/><circle cx="50" cy="50" r="19" fill="#f2f2f4"/><circle cx="50" cy="50" r="15" fill="#5c8df0"/></symbol>
<symbol id="xkey" viewBox="0 0 100 100"><g stroke-linejoin="round">
<g fill="#000" stroke="#000" stroke-width="18"><circle cx="76" cy="24" r="23"/><path d="M4 17h12l30 30 10-12 16 14-14 9 24 24v14H72L48 70l-8 6v8h-9v8L14 97H4V84l30-28L4 28z"/></g>
<g fill="#fff" stroke="#fff" stroke-width="11"><circle cx="76" cy="24" r="23"/><path d="M4 17h12l30 30 10-12 16 14-14 9 24 24v14H72L48 70l-8 6v8h-9v8L14 97H4V84l30-28L4 28z"/></g>
<g fill="url(#gKey)"><circle cx="76" cy="24" r="25"/><path d="M4 17h12l30 30 10-12 16 14-14 9 24 24v14H72L48 70l-8 6v8h-9v8L14 97H4V84l30-28L4 28z"/></g></g><circle cx="81" cy="20" r="11" fill="#000"/><circle cx="81" cy="20" r="8" fill="#fff"/></symbol>
<symbol id="slack" viewBox="0 0 100 100"><rect width="100" height="100" rx="22" fill="url(#gWhite)"/><g fill="#63c3ec"><rect x="14" y="33" width="34" height="15" rx="7.500"/><path d="M48 30H40a7.500 7.500 0 1 1 8-8z"/></g><g fill="#56b286"><rect x="52" y="15" width="15" height="34" rx="7.500"/><path d="M71 48v-8a7.500 7.500 0 1 1 8 8z"/></g><g fill="#e5b34c"><rect x="52" y="52" width="34" height="15" rx="7.500"/><path d="M52 71h8a7.500 7.500 0 1 1-8 8z"/></g><g fill="#cb3560"><rect x="33" y="52" width="15" height="34" rx="7.500"/><path d="M29 52v8a7.500 7.500 0 1 1-8-8z"/></g></symbol>
<symbol id="code" viewBox="0 0 100 100"><rect width="100" height="100" rx="22" fill="#fff"/><path d="M66 15l18 9v52l-18 9z" fill="#3f93e6"/><path d="M66 15v22L22 68l-8-6v-6z" fill="#2565a8"/><path d="M66 85V63L22 32l-8 6v6z" fill="#2f7acb"/></symbol>
<symbol id="prev" viewBox="0 0 100 100"><rect width="100" height="100" rx="20" fill="#eff0f2"/><rect x="7" y="8" width="86" height="84" rx="12" fill="url(#gSky)"/><path d="M7 54h86v26a12 12 0 0 1-12 12H19A12 12 0 0 1 7 80z" fill="#1f3264"/><path d="M7 68l12-3 10 6 12-4 14 8v17H19A12 12 0 0 1 7 80z" fill="#cfd9e6"/><path d="M14 90l12-9 18 4 4 7H19z" fill="#7d6c5b"/><path d="M54 68h40l9 30q0 7-8 7H52q-9 0-8-7z" fill="url(#gGlass)"/><path d="M60 76h26v8l-12 6-10-4z" fill="#9aa0a6"/><ellipse cx="73" cy="97" rx="20" ry="6" fill="#fff"/><rect x="51" y="50" width="45" height="21" rx="5" fill="#17181a"/><ellipse cx="73" cy="53" rx="22" ry="5" fill="#333"/></symbol>
<symbol id="trash" viewBox="0 0 100 100"><path d="M6 4h88L83 92q-2 12-15 12H33q-13 0-15-12z" fill="url(#gTrash)"/><ellipse cx="50" cy="6" rx="44" ry="11" fill="#c9bcd0" stroke="#eef0f2" stroke-width="2"/></symbol>
<symbol id="cal" viewBox="0 0 100 100"><rect width="100" height="100" rx="22" fill="#f4f3f2"/><path d="M0 30v-8A22 22 0 0 1 22 0h56a22 22 0 0 1 22 22v8z" fill="#d8573f"/><text x="50" y="24" text-anchor="middle" font-family="Inter" font-weight="600" font-size="20" fill="#fbe6e0">MAR</text><text x="50" y="82" text-anchor="middle" font-family="Inter" font-weight="300" font-size="56" fill="#2c2c2c">4</text></symbol>
<symbol id="nums" viewBox="0 0 100 100"><rect width="100" height="100" rx="22" fill="#f3f7ee"/><path d="M0 20h100M0 40h100M0 60h100M20 0v100M40 0v100M60 0v100M80 0v100" stroke="#d8e4cf" stroke-width="1"/><path d="M19 53h14v33H19z" fill="#d04a3c"/><path d="M35 34h14v52H35z" fill="#e9962c"/><path d="M51 14h14v72H51z" fill="#5ed43a"/><path d="M67 24h14v62H67z" fill="#4a58ea"/></symbol>
<symbol id="subl" viewBox="0 0 100 100"><rect width="100" height="100" rx="22" fill="#474441"/><path d="M22 38l54-22v22L48 48l28 12v10L22 86V66l28-11-28-9z" fill="#e8a436"/></symbol>
<symbol id="docker" viewBox="0 0 100 100"><circle cx="50" cy="50" r="53" fill="#5d8df2"/><path d="M16 49h54q6 0 8-8 1-5 4-5l6 7q-4 9-14 9-5 22-30 22-28 0-28-25zM25 38h9v9h-9zM36 38h9v9h-9zM47 38h9v9h-9zM58 38h9v9h-9zM36 28h9v8h-9zM47 28h9v8h-9zM47 22h9v4h-9z" fill="#fff" transform="translate(-2 0)"/></symbol>
<symbol id="shut" viewBox="0 0 100 100"><rect width="100" height="100" rx="22" fill="#5a7ac8"/><rect x="14" y="14" width="72" height="72" fill="#fff"/><path d="M50 31l16 9v20l-16 9-16-9V40z" fill="#5873c4"/><path d="M50 31L14 24M66 40L44 14M66 60L84 28M50 69l36 8M34 60l24 26M34 40L16 74" stroke="#5873c4" stroke-width="3"/></symbol>
<symbol id="txt" viewBox="0 0 100 120"><path d="M12 4h58l22 28v84H12z" fill="#ecebea"/><path d="M70 4l22 32H70z" fill="#c9c8ce"/><text x="52" y="104" text-anchor="middle" font-family="Inter" font-size="15" fill="#888">TXT</text></symbol>
<symbol id="down" viewBox="0 0 100 100"><rect width="100" height="100" fill="#5b82d6"/><circle cx="70" cy="18" r="14" fill="#8cb8ea"/><rect x="50" y="54" width="38" height="36" rx="8" fill="#9ac4ee"/><rect x="20" y="20" width="60" height="62" rx="16" fill="#5b88d8" stroke="#fff" stroke-width="7"/><path d="M50 38v18" stroke="#fff" stroke-width="7"/><path d="M39 52h22L50 65z" fill="#fff"/></symbol>
</defs></svg>

<header class="osbar d-flex align-items-center justify-content-between flex-shrink-0">
  <nav class="d-flex align-items-center">
    <svg width="28" height="32" aria-label="Apple"><use href="#apple"/></svg>
    <a href="#" class="fw-bold">Slack</a><a href="#">File</a><a href="#">Edit</a><a href="#">View</a><a href="#">Go</a><a href="#">History</a><a href="#">Window</a><a href="#">Help</a>
  </nav>
  <div class="d-flex align-items-center" style="gap:34px">
    <svg width="40" height="34"><use href="#whalew"/></svg>
    <svg width="38" height="34"><use href="#nodes"/></svg>
    <svg class="ic"><use href="#hexa"/></svg>
    <svg width="38" height="34"><use href="#kbd"/></svg>
    <svg width="52" height="32"><use href="#batt"/></svg>
    <svg class="ic"><use href="#wifi"/></svg>
    <svg class="ic"><use href="#user"/></svg>
    <svg class="ic"><use href="#mag"/></svg>
    <svg class="ic"><use href="#cc"/></svg>
    <time class="d-flex gap-3 text-nowrap"><span>Vie 4 de mar</span><span>16:32</span></time>
  </div>
</header>

<section class="callwin flex-grow-1 d-flex flex-column">
  <div class="titlebar position-relative d-flex align-items-center justify-content-center flex-shrink-0">
    <div class="lights position-absolute d-flex align-items-center"><span class="dotc" style="background:#ec6a5e"></span><span class="dotc" style="background:#f5bf4f"></span><span class="dotc" style="background:#61c554"></span></div>
    Slack | Slack call with Juan Diego Mendoza Garcia | 19:31
  </div>

  <div class="stagebox position-relative flex-grow-1 d-flex flex-column">
    <div class="vidbar d-flex align-items-center justify-content-between flex-shrink-0">
      <nav class="d-flex align-items-center">
        <svg width="22" height="26"><use href="#apple"/></svg>
        <a href="#" class="fw-bold">Chrome</a><a href="#">Archivo</a><a href="#">Editar</a><a href="#">Ver</a><a href="#">Historial</a><a href="#">Favoritos</a><a href="#">Perfiles</a><a href="#">Pestaña</a><a href="#">Ventana</a><a href="#">Ayuda</a>
      </nav>
      <div class="d-flex align-items-center" style="gap:30px">
        <svg width="28" height="26"><use href="#frame"/></svg>
        <svg width="32" height="28"><use href="#whale"/></svg>
        <svg width="28" height="28"><use href="#hexa"/></svg>
        <svg width="30" height="28"><use href="#nodes"/></svg>
        <svg width="28" height="28"><use href="#playc"/></svg>
        <svg width="30" height="28"><use href="#panel"/></svg>
        <svg width="28" height="28"><use href="#blue"/></svg>
        <span class="d-flex align-items-center" style="gap:9px">100% <svg width="46" height="28"><use href="#battc"/></svg></span>
        <svg width="30" height="28"><use href="#wifi"/></svg>
        <svg width="34" height="28"><use href="#kbd"/></svg>
        <svg width="28" height="28"><use href="#mag"/></svg>
        <span class="d-flex align-items-center gap-2"><svg width="28" height="28"><use href="#cc"/></svg><span class="rounded-circle" style="background:#df8a3e;width:9px;height:9px"></span></span>
        <time class="d-flex gap-3 text-nowrap"><span>Vie 4 de mar</span><span>16:32</span></time>
      </div>
    </div>

    <div class="tabstrip d-flex flex-shrink-0">
      <div class="lts d-flex align-items-center flex-shrink-0"><span class="dotc" style="background:#e8705f"></span><span class="dotc" style="background:#e6c03d"></span><span class="dotc" style="background:#66c045"></span></div>
      <div class="tabx sep d-flex align-items-center"><svg class="ic"><use href="#okta"/></svg><span class="tt">Panel Mis aplicaciones | k</span><button class="plain" aria-label="Cerrar"><svg class="xs"><use href="#x"/></svg></button></div>
      <div class="tabx sep d-flex align-items-center"><svg class="ic"><use href="#dog"/></svg><span class="tt">APM Home (env:staging)</span><button class="plain" aria-label="Cerrar"><svg class="xs"><use href="#x"/></svg></button></div>
      <div class="tabx d-flex align-items-center"><svg class="ic"><use href="#harn"/></svg><span class="tt">Harness | Setup Triggers -</span><button class="plain" aria-label="Cerrar"><svg class="xs"><use href="#x"/></svg></button></div>
      <div class="tabx on d-flex align-items-center"><svg class="ic"><use href="#harn"/></svg><span class="tt">Harness | Deployments - H</span><button class="plain" aria-label="Cerrar"><svg class="xs"><use href="#x"/></svg></button></div>
      <div class="tabx sep d-flex align-items-center"><svg class="ic"><use href="#butler"/></svg><span class="tt">jenkins / onboarding_rica</span><button class="plain" aria-label="Cerrar"><svg class="xs"><use href="#x"/></svg></button></div>
      <div class="tabx sep d-flex align-items-center"><svg class="ic"><use href="#gmail"/></svg><span class="tt">Recibidos (17) - juan.men</span><button class="plain" aria-label="Cerrar"><svg class="xs"><use href="#x"/></svg></button></div>
      <div class="tabx sep d-flex align-items-center"><svg class="ic"><use href="#jira"/></svg><span class="tt">P-Cloud Infrastructure 2 -</span><button class="plain" aria-label="Cerrar"><svg class="xs"><use href="#x"/></svg></button></div>
      <div class="tabx sep d-flex align-items-center"><svg class="ic"><use href="#cat"/></svg><span class="tt">GitHub</span><button class="plain" aria-label="Cerrar"><svg class="xs"><use href="#x"/></svg></button></div>
      <div class="flex-grow-1 d-flex align-items-center justify-content-between" style="padding:0 20px 0 28px"><button class="plain" aria-label="Nueva"><svg width="22" height="22" viewBox="0 0 22 22"><path d="M11 1v20M1 11h20" stroke="currentColor" stroke-width="3"/></svg></button><svg width="22" height="22"><use href="#chev"/></svg></div>
    </div>

    <div class="toolrow d-flex flex-shrink-0">
      <div class="navs d-flex align-items-center flex-shrink-0"><svg class="ic"><use href="#back"/></svg><svg class="ic" style="color:#77787b"><use href="#fwd"/></svg><svg class="ic"><use href="#reload"/></svg></div>
      <div class="urlbar flex-grow-1 d-flex align-items-center">
        <svg width="26" height="28" style="margin-right:16px"><use href="#lock"/></svg><span><b>app.harness.io</b>/#/account/qXIdGVF5SvS549EhQEOHIA/deployments</span>
        <div class="right ms-auto d-flex align-items-center" style="color:#c7c8ca">
          <span class="cell d-flex align-items-center justify-content-center" style="background:#5f6164"><svg width="28" height="28"><use href="#fdoc"/></svg></span>
          <span class="cell d-flex align-items-center justify-content-center"><svg width="30" height="30"><use href="#zoomp"/></svg></span>
          <span class="cell d-flex align-items-center justify-content-center"><svg width="30" height="30"><use href="#share"/></svg></span>
          <span class="cell d-flex align-items-center justify-content-center"><svg width="30" height="30"><use href="#star"/></svg></span>
        </div>
      </div>
      <div class="ext d-flex align-items-center">
        <span class="position-relative"><svg width="32" height="30" viewBox="0 0 32 30"><rect width="32" height="26" y="2" fill="#d8413a"/><path d="M3 4l13 12L29 4v22H3z" fill="#fff"/><path d="M3 4l13 12L29 4" stroke="#d8413a" stroke-width="5" fill="none"/></svg><span class="position-absolute rounded-1 text-center" style="background:#c9343a;width:25px;height:20px;font-size:15px;line-height:20px;right:-10px;bottom:-10px">17</span></span>
        <svg width="30" height="28" viewBox="0 0 30 28"><path fill="#6b87d4" d="M0 0h30v28H0z"/><path fill="#8a8f98" d="M0 0h30v5H0z"/></svg>
        <svg width="32" height="32"><use href="#puz"/></svg>
        <svg width="42" height="42" viewBox="0 0 42 42"><circle cx="21" cy="21" r="21" fill="#d9dcc9"/><path d="M12 42V26q8-8 17 0v14z" fill="#20284a"/><circle cx="20" cy="15" r="6" fill="#5b4436"/><path d="M4 30h9l2 10z" fill="#444"/></svg>
        <svg width="12" height="30"><use href="#vdots"/></svg>
      </div>
    </div>

    <div class="marks d-flex align-items-center flex-shrink-0">
      <a href="#" class="d-flex align-items-center"><svg class="ic"><use href="#okta"/></svg>Okta</a>
      <a href="#" class="d-flex align-items-center"><svg class="ic"><use href="#lst"/></svg>Tasks</a>
      <a href="#" class="d-flex align-items-center"><svg class="ic"><use href="#jira"/></svg>Jira</a>
      <a href="#" class="d-flex align-items-center"><svg class="ic"><use href="#jira"/></svg>Service Desk</a>
      <a href="#" class="d-flex align-items-center"><svg class="ic"><use href="#butler"/></svg>Jenkins</a>
      <a href="#" class="d-flex align-items-center"><svg class="ic"><use href="#cube"/></svg>AWS SSM</a>
      <a href="#" class="d-flex align-items-center"><svg class="ic"><use href="#sheet"/></svg>Support Calendar</a>
      <a href="#" class="d-flex align-items-center"><svg class="ic"><use href="#conf"/></svg>Platform Docume...</a>
      <a href="#" class="d-flex align-items-center"><svg class="ic"><use href="#wiki"/></svg>La wikipedia de K...</a>
      <a href="#" class="d-flex align-items-center"><svg class="ic"><use href="#sonar"/></svg>Sonarqube</a>
      <a href="#" class="d-flex align-items-center"><svg class="ic"><use href="#pbin"/></svg>PrivateBin</a>
      <a href="#" class="d-flex align-items-center"><svg class="ic"><use href="#jira"/></svg>Kueski Service De...</a>
      <a href="#" class="d-flex align-items-center"><svg class="ic"><use href="#wiki"/></svg>Promociones</a>
      <span class="fin ms-auto d-flex align-items-center">favoritos<span style="width:2px;height:28px;background:#58595c"></span><a href="#" class="d-flex align-items-center"><svg class="ic"><use href="#rlist"/></svg>Lista de lectura</a></span>
    </div>

    <div class="findbox position-absolute d-flex align-items-center">
      <label class="visually-hidden" for="find">Buscar</label><input id="find" type="text" value="ricar">
      <span class="ms-auto" style="margin-right:30px;font-size:21px">0/0</span>
      <span style="width:2px;height:46px;background:#313235;margin-right:32px"></span>
      <div class="d-flex align-items-center" style="gap:34px;color:#66686b"><svg width="24" height="24"><use href="#chevu"/></svg><svg width="24" height="24"><use href="#chev"/></svg><svg width="20" height="20" style="color:#d7d8da"><use href="#x"/></svg></div>
    </div>

    <div class="app flex-grow-1 d-flex flex-column">
      <div class="apphead d-flex align-items-center">
        <svg width="50" height="50" opacity=".85"><use href="#harn"/></svg><span class="brandtx">harness</span>
        <span style="width:2px;height:40px;background:#2b2c2e;margin:0 41px 0 44px"></span>
        <span class="big">Deployments</span>
        <button class="nextgen" style="margin-left:32px">Try NextGen</button>
        <div class="ms-auto d-flex" style="gap:30px">
          <span class="rnd d-flex align-items-center justify-content-center"><svg width="28" height="28"><use href="#mag"/></svg></span>
          <span class="rnd d-flex align-items-center justify-content-center"><svg width="32" height="32"><use href="#qm"/></svg></span>
          <span class="rnd d-flex align-items-center justify-content-center" style="background:#52749f">K</span>
        </div>
      </div>

      <div class="d-flex flex-grow-1" style="min-height:0">
        <nav class="side d-flex flex-column">
          <a href="#" style="font-weight:400;color:#4c4c4f;height:119px;font-size:27px"><svg class="ic"><use href="#cbar"/></svg>Collapse sidebar</a>
          <div class="line"></div>
          <div class="cdblock">
            <a href="#" style="color:#343f8c"><svg class="ic"><use href="#cdi"/></svg>Continuous Deployment<svg width="22" height="22" style="margin-left:20px"><use href="#chevu"/></svg></a>
            <a href="#" class="sub">Overview</a>
            <a href="#" class="sub" style="height:82px;background:#747b90;color:#3c4c8e">Deployments</a>
            <a href="#" class="sub">Services</a>
            <a href="#" class="sub" style="height:88px">Serverless Functions</a>
          </div>
          <a href="#"><svg class="ic"><use href="#shield"/></svg>Continuous Verification</a>
          <a href="#" style="height:125px"><svg class="ic" style="width:42px"><use href="#cloud"/></svg>Cloud Cost Management<svg width="22" height="22" class="ms-auto" style="margin-right:47px"><use href="#chev"/></svg></a>
          <div class="line"></div>
          <a href="#"><svg class="ic"><use href="#gauge"/></svg>Custom Dashboards</a>
          <a href="#"><svg class="ic"><use href="#lock"/></svg>Security<svg class="ms-auto" width="22" height="22" style="margin-right:47px"><use href="#chev"/></svg></a>
          <div class="line"></div>
          <a href="#"><svg class="ic"><use href="#gear"/></svg>Setup</a>
          <a href="#"><span class="position-relative"><svg class="ic"><use href="#bell"/></svg><span class="position-absolute" style="font-size:17px;font-weight:400;left:36px;top:-20px;color:#55565a">16</span></span>Notifications</a>
          <a href="#"><svg class="ic"><use href="#horn"/></svg>What's New!</a>
        </nav>
        <div class="track"><div></div></div>

        <main class="main flex-grow-1 d-flex flex-column">
          <div class="mainhead d-flex align-items-center">
            <span style="font-size:33px;font-weight:600">Deployments</span><svg width="32" height="32" style="margin-left:14px;color:#5d5d5f"><use href="#q"/></svg>
            <button class="filter ms-auto d-flex align-items-center justify-content-end">Load Saved Filter<span style="border:7px solid transparent;border-top:9px solid #515153;border-bottom:0"></span></button>
            <svg width="40" height="40" style="margin-left:33px;color:#313236"><use href="#funnel"/></svg><span style="font-size:34px;margin:0 41px 0 4px">(0)</span>
            <button class="startbtn d-flex align-items-center justify-content-center"><span style="border:10px solid transparent;border-left:15px solid #b4bacb;border-right:0"></span>Start New Deployment</button>
            <svg width="12" height="32" style="margin-left:41px"><use href="#vdots"/></svg>
          </div>
          <div class="cards d-flex flex-column">
            <article class="dep">
              <div class="dephead d-flex align-items-center justify-content-between"><h2>Notes_manager-pipeline</h2>
                <div class="d-flex align-items-center"><span class="paused d-flex align-items-center"><svg width="30" height="34"><use href="#pz"/></svg>PAUSED</span><span style="width:1px;height:44px;background:#777;margin:0 48px 0 30px"></span><span style="border:10px solid transparent;border-left:15px solid #4b4c50;border-right:0;margin-right:42px"></span><span style="width:17px;height:19px;background:#4b4c50;margin-right:46px"></span><svg width="28" height="8" viewBox="0 0 28 8" fill="#4b4c50"><circle cx="4" cy="4" r="2.500"/><circle cx="14" cy="4" r="2.500"/><circle cx="24" cy="4" r="2.500"/></svg></div></div>
              <div class="apprw d-flex align-items-center justify-content-between"><span>Application: <a href="#" class="ms-1">Kueski Cash</a></span><span class="art">_PRODUCT-7439_FIR-4423_ea177d793e268c6...</span></div>
              <div class="rail">
                <div class="stages d-flex">
                  <div class="stg"><div class="sh d-flex align-items-center justify-content-center fw-semibold">STAGE 1</div><div class="sb d-flex flex-column align-items-center justify-content-center">Artifact Collection<small>4s</small></div></div>
                  <div class="stg"><div class="sh"></div></div><div class="stg"><div class="sh"></div></div><div class="stg wait"></div>
                  <div class="stg off"><div class="sh d-flex align-items-center justify-content-center">STAGE 2</div><div class="sb d-flex flex-column align-items-center justify-content-center">IaC Infrastructure as ...<small>Estimated Time&nbsp; 48s</small></div></div>
                  <div class="stg off"><div class="sh d-flex align-items-center justify-content-center">STAGE 2</div><div class="sb d-flex flex-column align-items-start justify-content-center text-nowrap" style="padding-left:28px"><span>Deploy to Shared</span><small class="ms-2">Estimated Time&nbsp; 8m 13</small></div></div>
                </div>
                <div class="tips d-flex"><svg class="tip" color="#5f8168"><use href="#ptr"/></svg><svg class="tip" color="#5f8168"><use href="#ptr"/></svg><svg class="tip" color="#5f8168"><use href="#ptr"/></svg><svg class="tip" color="#7c7a1a"><use href="#ptr"/></svg><svg class="tip" color="#787878"><use href="#ptr"/></svg><svg class="tip" color="#787878"><use href="#ptr"/></svg></div>
                <div class="nodes d-flex align-items-center"><span class="brk l"></span><svg class="cn"><use href="#ok"/></svg><span class="con d-flex align-items-center"><i></i></span><svg class="cn"><use href="#ok"/></svg><span class="con d-flex align-items-center"><i></i></span><svg class="cn"><use href="#ok"/></svg><span class="con d-flex align-items-center"><i></i></span><svg class="cn"><use href="#hold"/></svg><span class="con gy d-flex align-items-center"><i></i></span><svg class="cn"><use href="#offn"/></svg><span class="con gy d-flex align-items-center"><i></i></span><svg class="cn"><use href="#offn"/></svg><span class="con gy d-flex align-items-center"><i></i></span></div>
              </div>
              <div class="errs"><div style="color:#8b3236;height:55px">User is not authorized to</div><div>Only Users in the following</div></div>
              <svg class="nextchev position-absolute" viewBox="0 0 22 44"><path d="M4 3l14 19L4 41" fill="none" stroke="#555" stroke-width="3"/></svg>
            </article>
            <article class="dep">
              <div class="dephead d-flex align-items-center justify-content-between"><h2>fraud_minerva-shared</h2>
                <div class="d-flex align-items-center"><span class="paused d-flex align-items-center"><svg width="30" height="34"><use href="#pz"/></svg>PAUSED</span><span style="width:1px;height:44px;background:#777;margin:0 48px 0 30px"></span><span style="border:10px solid transparent;border-left:15px solid #4b4c50;border-right:0;margin-right:42px"></span><span style="width:17px;height:19px;background:#4b4c50;margin-right:46px"></span><svg width="28" height="8" viewBox="0 0 28 8" fill="#4b4c50"><circle cx="4" cy="4" r="2.500"/><circle cx="14" cy="4" r="2.500"/><circle cx="24" cy="4" r="2.500"/></svg></div></div>
              <div class="apprw b d-flex align-items-center justify-content-between"><span>Application: <a href="#" class="ms-1">Kueski Cash</a></span><span class="art">PRODUCT-7439_FIR-4423_ea177d793e268c6...</span></div>
              <div class="rail">
                <div class="stages d-flex">
                  <div class="stg"><div class="sh d-flex align-items-center justify-content-center fw-semibold">STAGE 1</div><div class="sb d-flex flex-column align-items-center justify-content-center">Artifact Collection<small>3s</small></div></div>
                  <div class="stg"><div class="sh"></div><div class="sb d-flex flex-column align-items-center justify-content-center">&nbsp;<small>3s</small></div></div>
                  <div class="stg"><div class="sh"></div><div class="sb d-flex flex-column align-items-center justify-content-center">&nbsp;<small>4s</small></div></div>
                  <div class="stg wait"><div class="sh" style="background:none"></div><div class="sb d-flex align-items-center justify-content-center gap-2"><svg width="24" height="24"><use href="#user"/></svg>Approval</div></div>
                  <div class="stg off"><div class="sh d-flex align-items-center justify-content-center">STAGE 2</div><div class="sb d-flex align-items-center justify-content-center">IaC Infrastructure as ...</div></div>
                  <div class="stg off"><div class="sh d-flex align-items-center justify-content-center">STAGE 3</div><div class="sb d-flex align-items-center text-nowrap" style="padding-left:28px">Ansible Sync SSM ...</div></div>
                </div>
                <div class="tips d-flex"><svg class="tip" color="#5f8168"><use href="#ptr"/></svg><svg class="tip" color="#5f8168"><use href="#ptr"/></svg><svg class="tip" color="#5f8168"><use href="#ptr"/></svg><svg class="tip" color="#7c7a1a"><use href="#ptr"/></svg><svg class="tip" color="#787878"><use href="#ptr"/></svg><svg class="tip" color="#787878"><use href="#ptr"/></svg></div>
                <div class="nodes d-flex align-items-center"><span class="brk l"></span><svg class="cn"><use href="#ok"/></svg><span class="con d-flex align-items-center"><i></i>Running in parallel<i></i></span><svg class="cn"><use href="#ok"/></svg><span class="con d-flex align-items-center"><i></i>Running in parallel<i></i></span><svg class="cn"><use href="#ok"/></svg><span class="brk r"></span><span class="con after d-flex align-items-center"><i></i></span><svg class="cn"><use href="#hold"/></svg><span class="con gy d-flex align-items-center"><i></i></span><svg class="cn"><use href="#offn"/></svg><span class="con gy d-flex align-items-center"><i></i></span><svg class="cn"><use href="#offn"/></svg><span class="con gy d-flex align-items-center"><i></i></span></div>
              </div>
              <svg class="nextchev position-absolute" viewBox="0 0 22 44"><path d="M4 3l14 19L4 41" fill="none" stroke="#555" stroke-width="3"/></svg>
            </article>
          </div>
        </main>
      </div>

      <button class="helpfab plain position-absolute d-flex align-items-center justify-content-center" aria-label="Help" style="color:#c6cfee"><svg><use href="#q"/></svg></button>

      <div class="dlgwrap position-absolute d-flex justify-content-center">
        <form class="dlg position-relative" onsubmit="return false">
          <div class="dlghead d-flex align-items-center"><span>Start New Deployment</span><svg width="32" height="34" style="margin-left:16px"><use href="#q"/></svg><button type="button" class="plain ms-auto" aria-label="Close"><svg width="30" height="30"><use href="#x"/></svg></button></div>
          <div class="dlgbody">
            <div class="rad d-flex align-items-center"><input type="radio" name="mode" id="m1" checked style="margin-left:2px"><label for="m1">Deploy by executing a Pipeline (recommended)</label><input type="radio" name="mode" id="m2" style="margin-left:22px"><label for="m2">Execute a Workflow directly</label></div>
            <label class="lb" for="appsel">Application*</label>
            <div class="position-relative" style="margin:13px 0 32px"><select id="appsel"><option>Kueski Cash</option></select><span class="selx position-absolute d-flex align-items-center"><svg width="15" height="15"><use href="#x"/></svg><span style="border:10px solid transparent;border-top:11px solid #9a9a9c;border-bottom:0"></span></span></div>
            <label class="lb" for="pipsel">Pipeline*</label>
            <div class="position-relative" style="margin-top:12px"><select id="pipsel"><option>onboarding_ricardo_lopez-tbd-pipeline</option></select><span class="selx position-absolute d-flex align-items-center"><svg width="15" height="15"><use href="#x"/></svg><span style="border:10px solid transparent;border-top:11px solid #9a9a9c;border-bottom:0"></span></span></div>
            <div class="wv">Workflow Variables</div>
            <div style="padding:0 39px">
              <table class="vars"><thead><tr><th>Name</th><th>Entity Type</th><th>Value</th></tr></thead><tbody>
                <tr><td><label for="v1">TAG*</label></td><td></td><td><input id="v1" class="tx tag" type="text" value="d9582a3618046823b7c72def5a2c56539"></td></tr>
                <tr><td><label for="v2">ref</label></td><td></td><td><input id="v2" class="tx" type="text" placeholder="Enter value"></td></tr>
                <tr><td><label for="v3">pull_request_title</label></td><td></td><td><input id="v3" class="tx" type="text" placeholder="Enter value"></td></tr>
              </tbody></table>
            </div>
            <label class="lb" for="nts" style="margin:2px 0 12px">Notes</label>
            <input id="nts" class="tx nt d-block" type="text" placeholder="Enter Notes">
            <div class="chk position-relative d-flex align-items-center" style="margin-top:35px"><input type="checkbox" id="only"><label for="only">Send notification to me only</label><svg width="28" height="28" style="margin-left:10px;color:#a0a0a4"><use href="#q"/></svg>
              <svg class="cursor position-absolute" viewBox="0 0 20 34"><path d="M3 4v22l5-5 4 10 4-2-4-9h6z" fill="#111" stroke="#ddd" stroke-width="1"/></svg></div>
            <button class="submit" type="submit">Submit</button>
          </div>
        </form>
      </div>
    </div>

    <div class="vdock d-flex">
      <div class="vshelf d-flex align-items-center">
        <div class="vgrp d-flex justify-content-between flex-shrink-0" style="width:1442px">
          <div class="it"><svg><use href="#finder2"/></svg><span class="run position-absolute"></span></div>
          <div class="it"><svg><use href="#launch"/></svg></div>
          <div class="it"><svg><use href="#cal"/></svg></div>
          <div class="it"><svg><use href="#nums"/></svg></div>
          <div class="it"><svg><use href="#chrome"/></svg><span class="run position-absolute"></span></div>
          <div class="it"><svg><use href="#sett"/></svg></div>
          <div class="it"><svg><use href="#slack"/></svg><span class="bdg sm position-absolute d-flex align-items-center justify-content-center">•</span><span class="run position-absolute"></span></div>
          <div class="it"><svg><use href="#term"/></svg><span class="run position-absolute"></span></div>
          <div class="it"><svg><use href="#xkey"/></svg><span class="run position-absolute"></span></div>
          <div class="it"><svg><use href="#subl"/></svg><span class="run position-absolute"></span></div>
          <div class="it"><svg><use href="#code"/></svg><span class="run position-absolute"></span></div>
          <div class="it"><svg><use href="#notes"/></svg></div>
        </div>
        <span class="vsep" style="margin:0 41px 0 43px"></span>
        <div class="vgrp d-flex justify-content-between flex-shrink-0" style="width:339px">
          <div class="it"><svg><use href="#docker"/></svg><span class="run position-absolute"></span></div>
          <div class="it"><svg><use href="#shut"/></svg><span class="run position-absolute"></span></div>
          <div class="it"><svg><use href="#activ"/></svg><span class="run position-absolute"></span></div>
        </div>
        <span class="vsep" style="margin:0 38px 0 42px"></span>
        <svg width="96" height="108"><use href="#txt"/></svg>
        <svg width="116" height="116" style="margin-left:17px"><use href="#down"/></svg>
        <span style="width:70px;height:60px;background:#18202e;border-top:6px solid #363b4d;margin-left:12px"></span>
      </div>
    </div>

    <div class="picker position-absolute d-flex align-items-center"><label for="hue">Pick a color</label><input id="hue" type="range" min="0" max="360" value="0"></div>
  </div>
</section>

<footer class="dockzone d-flex justify-content-center align-items-start">
  <div class="dockbar d-flex align-items-center">
    <div class="it"><svg><use href="#finder"/></svg><span class="run position-absolute"></span></div>
    <div class="it"><svg><use href="#launch"/></svg></div>
    <div class="it"><svg><use href="#notes"/></svg></div>
    <div class="it"><svg><use href="#remind"/></svg></div>
    <div class="it"><svg><use href="#activ"/></svg></div>
    <div class="it"><svg><use href="#sett"/></svg><span class="bdg position-absolute d-flex align-items-center justify-content-center">1</span></div>
    <div class="it"><svg><use href="#rmine"/></svg></div>
    <div class="it"><svg><use href="#idea"/></svg></div>
    <div class="it"><svg><use href="#postm"/></svg></div>
    <div class="it"><svg><use href="#term"/></svg></div>
    <div class="it"><svg><use href="#iterm"/></svg><span class="run position-absolute"></span></div>
    <div class="it"><svg><use href="#brave"/></svg><span class="run position-absolute"></span></div>
    <div class="it"><svg><use href="#chrome"/></svg></div>
    <div class="it"><svg><use href="#xkey"/></svg><span class="run position-absolute"></span></div>
    <div class="it"><svg><use href="#slack"/></svg><span class="run position-absolute"></span></div>
    <div class="it"><svg><use href="#code"/></svg><span class="run position-absolute"></span></div>
    <span class="dsep"></span>
    <div class="it"><svg><use href="#prev"/></svg><span class="run position-absolute"></span></div>
    <span class="dsep"></span>
    <div class="it"><svg><use href="#trash"/></svg></div>
  </div>
</footer>
<script src="https://cdn.jsdelivr.net/npm/bootstrap@5.3.0/dist/js/bootstrap.bundle.min.js"></script>
</body>
</html>
